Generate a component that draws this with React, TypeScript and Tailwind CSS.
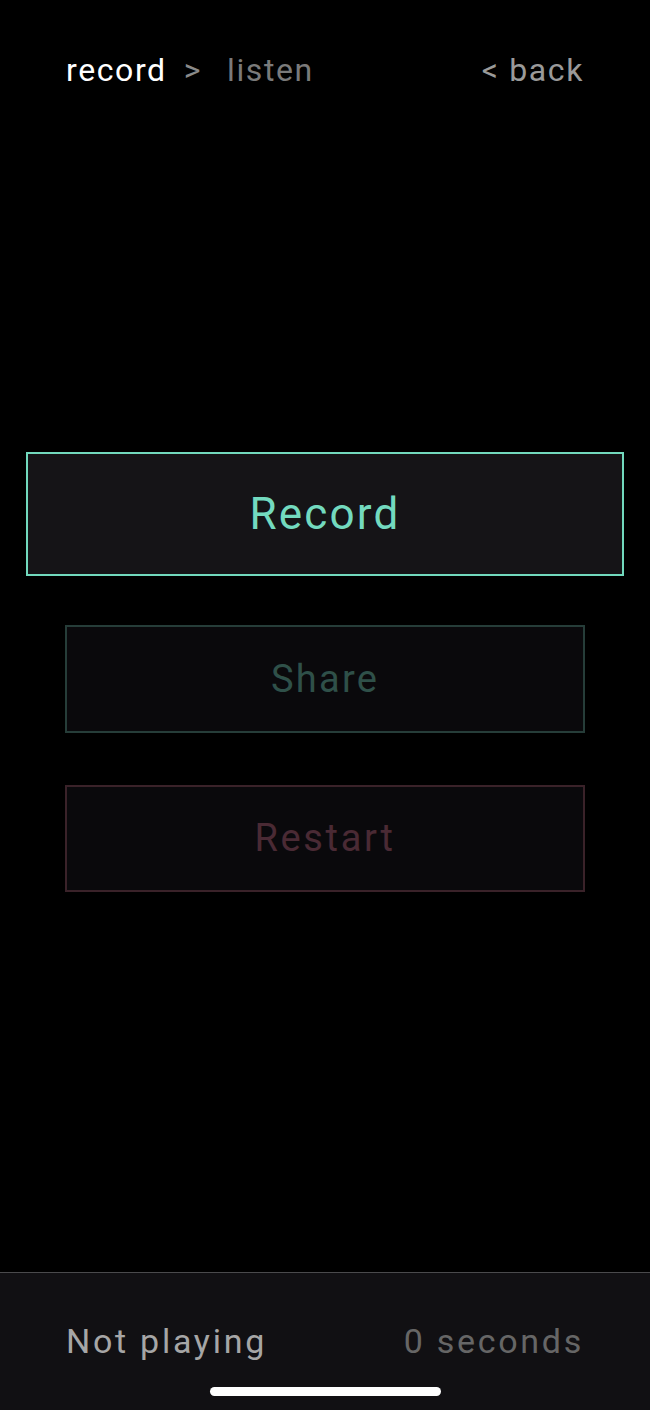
import React from "react";

const font = { fontFamily: '"Roboto", "Liberation Sans", sans-serif' };

export default function App() {
  return (
    <div className="flex h-[1410px] w-[650px] flex-col bg-black" style={font}>
      {/* breadcrumb header */}
      <div className="flex items-center justify-between px-[66px] pt-[50px] text-[32px] leading-[40px] tracking-[0.05em]">
        <div className="flex items-center">
          <span className="text-white">record</span>
          <span className="ml-[17px] text-[#8a8a8a]">&gt;</span>
          <span className="ml-[25px] text-[#7a7a7a]">listen</span>
        </div>
        <span className="text-[#9a9a9a]">&lt; back</span>
      </div>

      <div className="flex flex-1 flex-col pt-[362px]">
        <button className="mx-[26px] flex h-[124px] items-center justify-center border-2 border-[#72d9bd] bg-[#151417] text-[44px] tracking-[0.05em] text-[#73dabf]">
          Record
        </button>
        <button className="mx-[65px] mt-[49px] flex h-[108px] items-center justify-center border-2 border-[#263d39] bg-[#0a090c] text-[38px] tracking-[0.06em] text-[#2f5049]">
          Share
        </button>
        <button className="mx-[65px] mt-[52px] flex h-[107px] items-center justify-center border-2 border-[#3a2229] bg-[#0a090c] text-[38px] tracking-[0.07em] text-[#4a2a34]">
          Restart
        </button>
      </div>

      {/* player status */}
      <div className="flex h-[138px] flex-col border-t border-[#4a4a4c] bg-[#111013]">
        <div className="flex items-center justify-between px-[66px] pt-[48px] text-[34px] leading-[40px] tracking-[0.08em]">
          <span className="text-[#a6a6a6]">Not playing</span>
          <span className="text-[#666666]">0 seconds</span>
        </div>
        <div className="mx-auto mt-[26px] h-[9px] w-[231px] rounded-full bg-white" />
      </div>
    </div>
  );
}
